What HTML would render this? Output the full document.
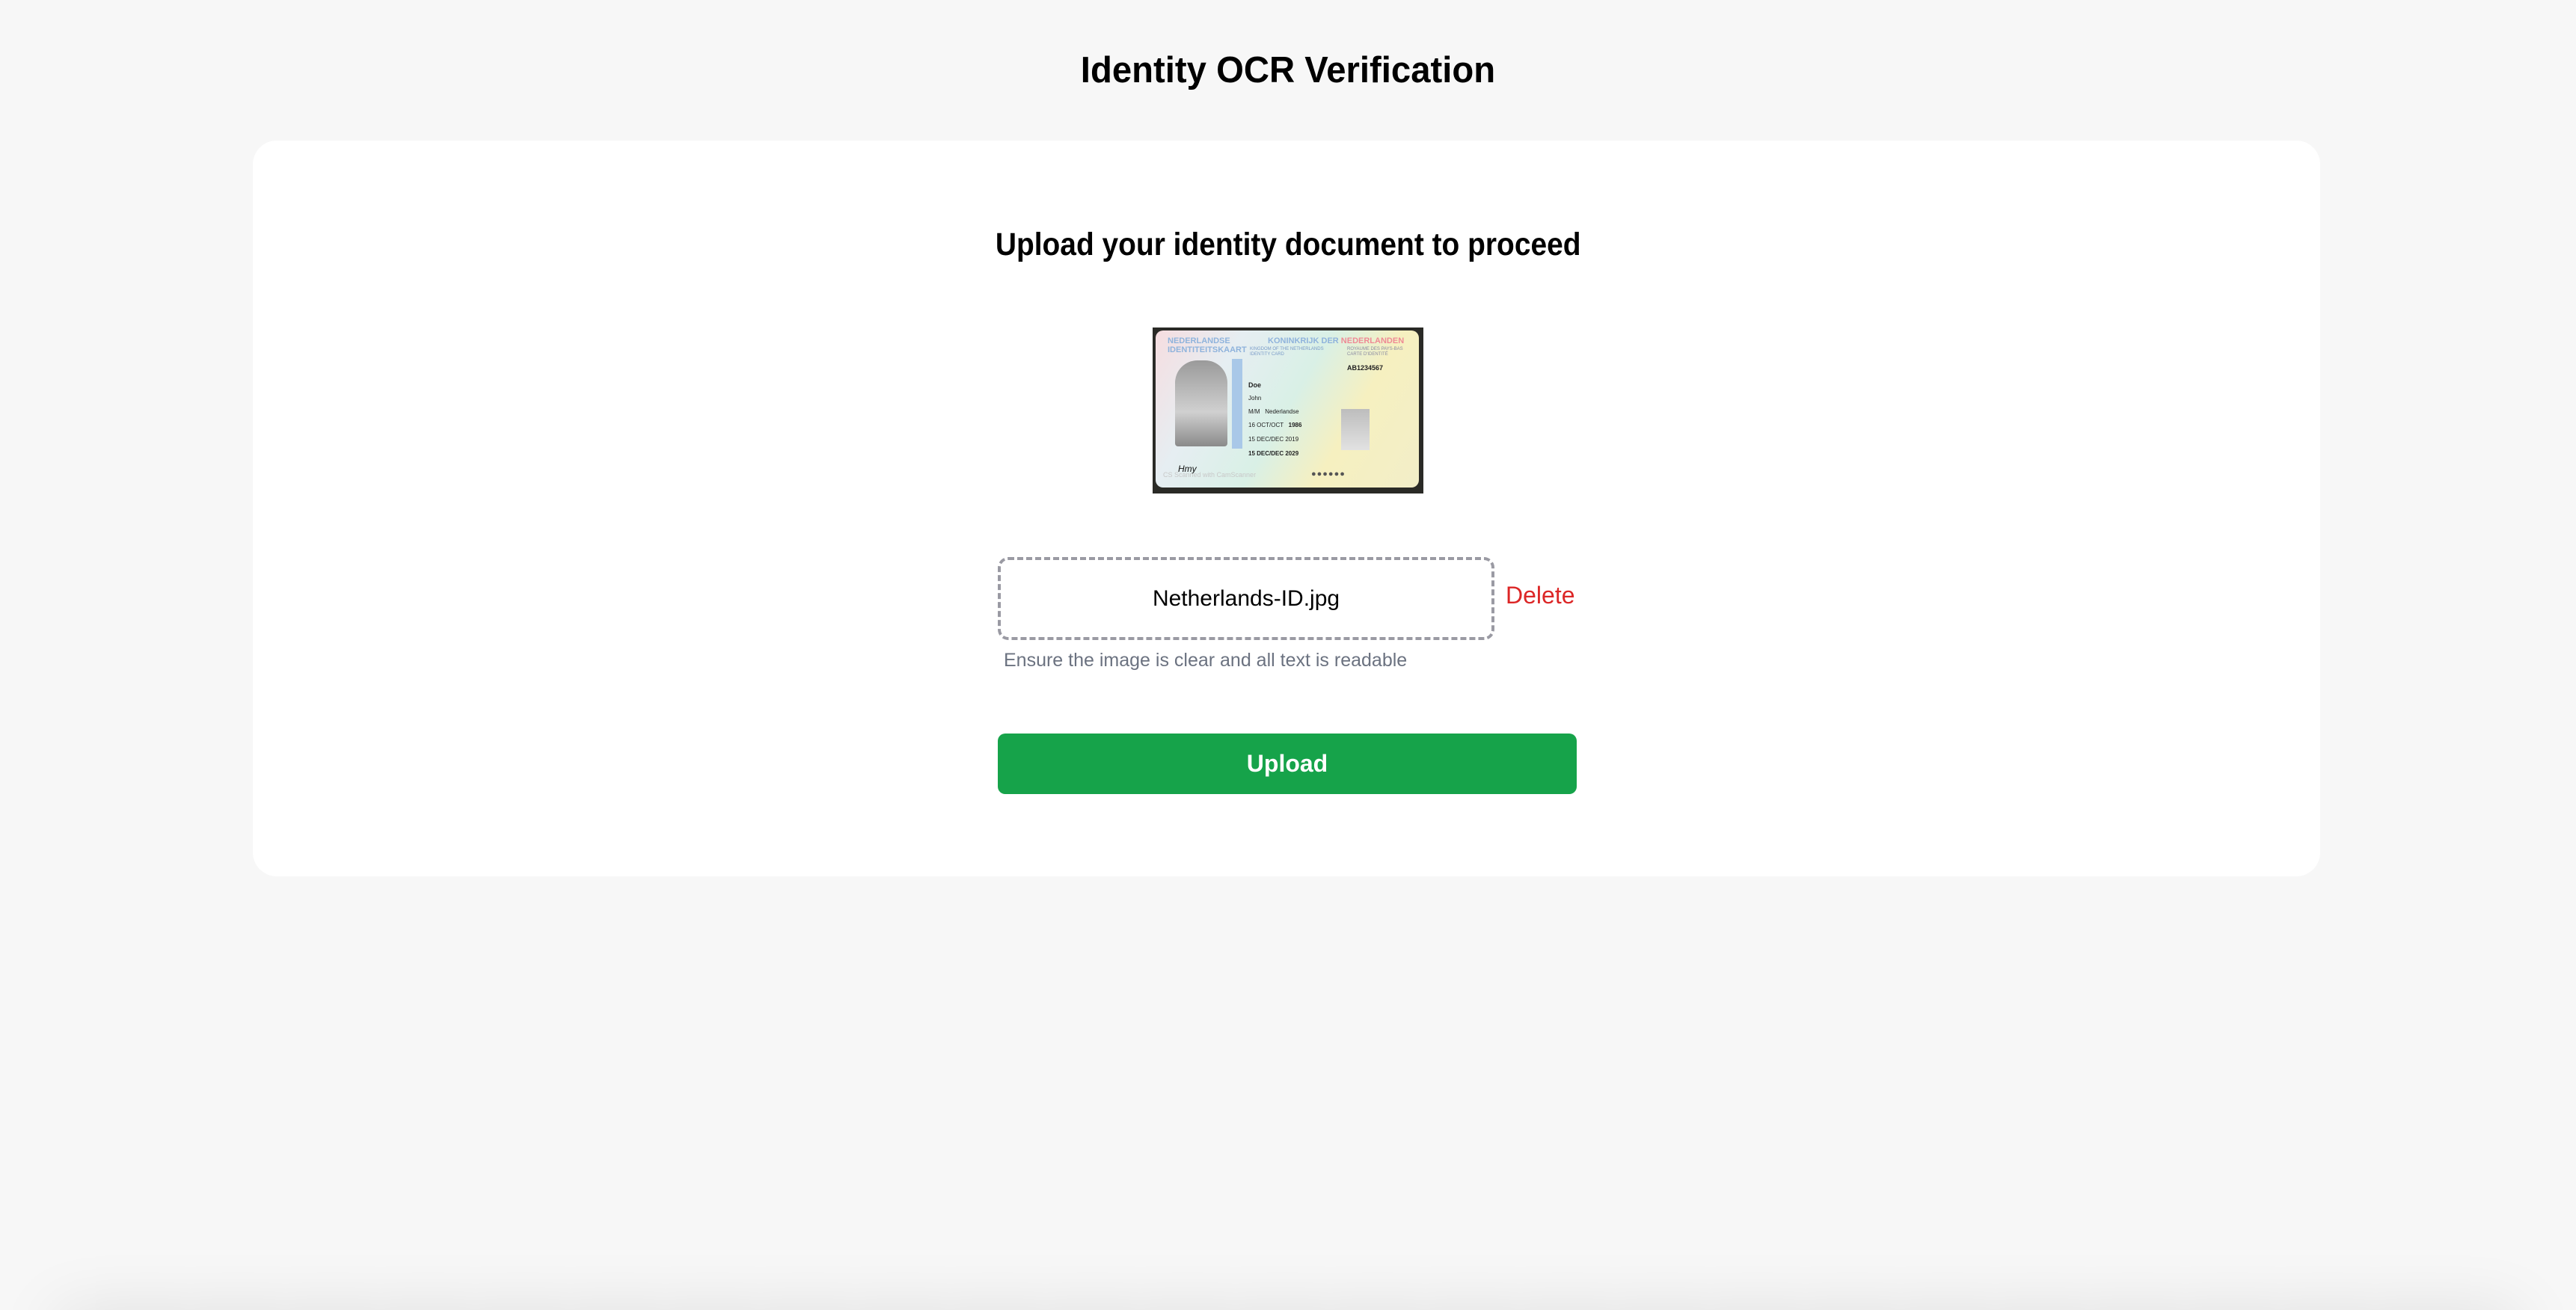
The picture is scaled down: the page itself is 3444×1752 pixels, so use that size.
<!DOCTYPE html>
<html style="overflow:hidden;height:1752px"><head><meta charset="utf-8"><style>
html,body{margin:0;padding:0}
body{width:3444px;height:1752px;background:#f7f7f7;position:relative;overflow:hidden;font-family:"Liberation Sans",Arial,sans-serif;}
h1{position:absolute;left:0;width:3444px;top:66px;margin:0;text-align:center;font-size:49px;font-weight:bold;color:#000;transform:scaleX(0.965);transform-origin:1722px 0;}
.card{position:absolute;left:338px;top:188px;width:2764px;height:984px;background:#fff;border-radius:32px;}
h2{position:absolute;left:0;width:3444px;top:303px;margin:0;text-align:center;font-size:43px;font-weight:bold;color:#000;transform:scaleX(0.905);transform-origin:1724px 0;}
.img{position:absolute;left:1541px;top:438px;width:362px;height:222px;background:#2a2a26;overflow:hidden;}
.idc{position:absolute;left:4px;top:4px;width:352px;height:210px;border-radius:10px;background:linear-gradient(120deg,#f6dde0 0%,#e6eef2 25%,#d9f0e6 50%,#f6f0c0 70%,#f2eec8 100%);overflow:hidden;font-family:"Liberation Sans",sans-serif;}
.idc div{position:absolute;white-space:nowrap}
.box{position:absolute;left:1334px;top:745px;width:656px;height:103px;border:4px dashed #9a9aa3;border-radius:14px;text-align:center;line-height:103px;font-size:30px;color:#000;}
.del{position:absolute;left:2013px;top:778px;font-size:32px;color:#dc2626;}
.hint{position:absolute;left:1342px;top:869px;font-size:25px;color:#6b7280;}
.btn{position:absolute;left:1334px;top:981px;width:774px;height:81px;background:#16a34a;border-radius:10px;color:#fff;font-weight:bold;font-size:32px;text-align:center;line-height:81px;}
.shwrap{position:absolute;left:0;top:1500px;width:3444px;height:252px;overflow:hidden;}
.shadow{position:absolute;left:110px;width:3224px;top:290px;height:100px;box-shadow:0 0 90px 30px rgba(0,0,0,0.13);background:#ddd;}
</style></head><body>
<h1>Identity OCR Verification</h1>
<div class="card"></div>
<h2>Upload your identity document to proceed</h2>
<div class="img"><div class="idc">
<div style="left:16px;top:8px;font-size:11px;font-weight:bold;color:#8fb3dc;line-height:12px">NEDERLANDSE<br>IDENTITEITSKAART</div>
<div style="left:150px;top:8px;font-size:11px;font-weight:bold;color:#8fb3dc">KONINKRIJK DER <span style="color:#ef8a95">NEDERLANDEN</span></div>
<div style="left:126px;top:22px;font-size:6px;color:#7a9bc8;line-height:7px">KINGDOM OF THE NETHERLANDS<br>IDENTITY CARD</div>
<div style="left:256px;top:22px;font-size:6px;color:#8a8aa0;line-height:7px">ROYAUME DES PAYS-BAS<br>CARTE D'IDENTITÉ</div>
<div style="left:256px;top:45px;font-size:9px;font-weight:bold;color:#222">AB1234567</div>
<div style="left:26px;top:40px;width:70px;height:115px;background:linear-gradient(180deg,#9a9a9a,#d0d0d0 60%,#8a8a8a);border-radius:30px 30px 4px 4px"></div>
<div style="left:102px;top:38px;width:14px;height:120px;background:#a9c8e8"></div>
<div style="left:124px;top:68px;font-size:9px;font-weight:bold;color:#222">Doe</div>
<div style="left:124px;top:86px;font-size:8px;color:#222">John</div>
<div style="left:124px;top:104px;font-size:8px;color:#222">M/M &nbsp;&nbsp;Nederlandse</div>
<div style="left:124px;top:122px;font-size:8px;color:#222">16 OCT/OCT &nbsp; <b>1986</b></div>
<div style="left:124px;top:141px;font-size:8px;color:#222">15 DEC/DEC 2019</div>
<div style="left:124px;top:160px;font-size:8px;font-weight:bold;color:#222">15 DEC/DEC 2029</div>
<div style="left:248px;top:105px;width:38px;height:55px;background:linear-gradient(180deg,#bdbdbd,#e2e2e2)"></div>
<div style="left:30px;top:178px;font-size:12px;font-style:italic;color:#111">Hmy</div>
<div style="left:10px;top:188px;font-size:9px;color:#c8c8c8">CS Scanned with CamScanner</div>
<div style="left:208px;top:186px;font-size:11px;color:#555;letter-spacing:1px">●●●●●●</div>
</div></div>
<div class="box">Netherlands-ID.jpg</div>
<div class="del">Delete</div>
<div class="hint">Ensure the image is clear and all text is readable</div>
<div class="btn">Upload</div>
<div class="shwrap"><div class="shadow"></div></div>
</body></html>
